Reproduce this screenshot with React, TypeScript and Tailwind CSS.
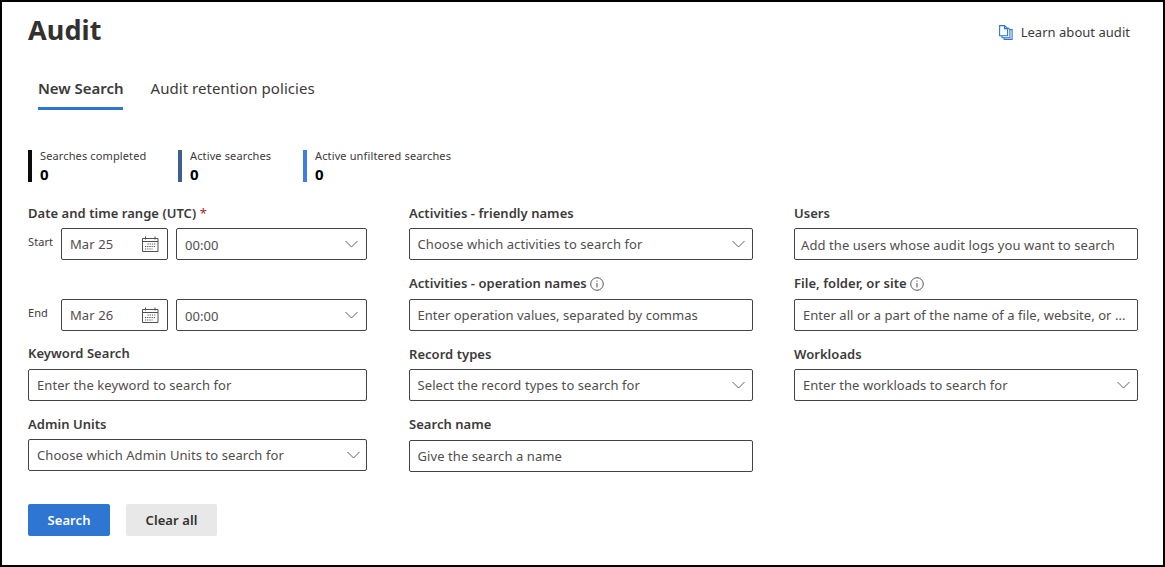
import type { ReactNode } from "react";

function Chevron() {
  return (
    <svg className="h-[8px] w-[13px] shrink-0" viewBox="0 0 13 8" fill="none" stroke="#605e5c" strokeWidth="1">
      <path d="M0.5 1l6 6 6-6" />
    </svg>
  );
}

function CalendarIcon() {
  return (
    <svg className="h-[16px] w-[17px] shrink-0" viewBox="0 0 17 16" fill="none" stroke="#505050">
      <path d="M0.5 2.5h15.5v13H0.5zM0.5 5.5h15.5M3.5 0.5v3M13 0.5v3" />
      <path d="M5.5 8h8.5M3 10.5h11M3 13h7.5" strokeDasharray="1.2 1" />
    </svg>
  );
}

function InfoIcon() {
  return (
    <svg className="mt-[2px] h-[14px] w-[14px] shrink-0" viewBox="0 0 14 14" fill="none" stroke="#444">
      <circle cx="7" cy="7" r="6.3" strokeWidth="0.9" />
      <path d="M7 6v4.5M7 3.6v1.2" strokeWidth="0.9" />
    </svg>
  );
}

function PagesIcon() {
  return (
    <svg className="h-[15px] w-[14px] shrink-0" viewBox="0 0 14 15" fill="none" stroke="#2f76d2" strokeWidth="1.1">
      <path d="M0.6 0.6h5l3 3v7.2h-8zM5.5 0.6v3h3" />
      <path d="M8.7 2.6l2.2 2v8.2H3v-2M10.9 4.6h2.2v9.8H5.2v-1.6" />
    </svg>
  );
}

function Label({ children, info, className = "" }: { children: ReactNode; info?: boolean; className?: string }) {
  return (
    <div className={`flex h-5 items-center gap-[3px] text-[13px] leading-5 font-semibold tracking-[0.04px] whitespace-nowrap text-[#3b3a39] ${className}`}>
      <span>{children}</span>
      {info && <InfoIcon />}
    </div>
  );
}

function Box({ children, icon, className = "pr-[7px] pl-2" }: { children: ReactNode; icon?: ReactNode; className?: string }) {
  return (
    <div className={`flex h-8 items-center justify-between rounded-[2px] border border-[#444] text-[13px] leading-5 whitespace-nowrap text-[#504e4c] ${className}`}>
      <span>{children}</span>
      {icon}
    </div>
  );
}

function Stat({ label, color, className }: { label: string; color: string; className: string }) {
  return (
    <div className={`flex h-8 gap-2 ${className}`}>
      <div className={`w-1 ${color}`} />
      <div className="whitespace-nowrap">
        <div className="h-3 text-[11px] leading-3 tracking-[0.13px] text-[#3b3a39]">{label}</div>
        <div className="mt-[3px] text-[15px] leading-[18px] font-bold text-black">0</div>
      </div>
    </div>
  );
}

function DateRow({ label, date }: { label: string; date: string }) {
  return (
    <div className="flex h-8">
      <div className="w-[33px] pt-[6px] text-[11px] leading-4 tracking-[0.1px] text-[#3b3a39]">{label}</div>
      <Box className="w-[107px] pr-[8px] pl-2" icon={<CalendarIcon />}>{date}</Box>
      <Box className="ml-2 w-[191px] pr-[8px] pl-2" icon={<Chevron />}>
        <span className="block pt-[2px]">00:00</span>
      </Box>
    </div>
  );
}

export default function App() {
  return (
    <div className="h-[567px] w-[1165px] overflow-hidden border-2 border-black bg-white font-['Noto_Sans','Open_Sans',sans-serif] tracking-[0.08px]">
      <header className="flex justify-between pr-[33px] pl-[26px]">
        <h1 className="pt-[10px] text-[27px] leading-9 font-bold text-[#323130]">Audit</h1>
        <div className="mt-5 flex h-5 items-center gap-2 text-[13px] leading-5 tracking-[0.03px] text-[#3b3a39]">
          <PagesIcon />
          <span>Learn about audit</span>
        </div>
      </header>

      <nav className="mt-[30px] flex gap-[27.5px] pl-[36px] text-[15px] leading-5 whitespace-nowrap text-[#3b3a39]">
        <div className="h-8 w-[85px] border-b-[3px] border-[#2f76d2] font-semibold tracking-[-0.03px]">New Search</div>
        <div className="tracking-[0.05px]">Audit retention policies</div>
      </nav>

      <section className="mt-10 flex pl-[26px]">
        <Stat label="Searches completed" color="bg-[#0b0b0b]" className="w-[150px]" />
        <Stat label="Active searches" color="bg-[#3b5f8f]" className="w-[125px]" />
        <Stat label="Active unfiltered searches" color="bg-[#3b7de9]" className="w-[160px]" />
      </section>

      <main className="mt-[21px] flex pl-[26px]">
        <div className="w-[339px]">
          <Label>
            Date and time range (UTC) <span className="font-normal text-[#a4262c]">*</span>
          </Label>
          <div className="mt-[5px]"><DateRow label="Start" date="Mar 25" /></div>
          <div className="mt-[39px]"><DateRow label="End" date="Mar 26" /></div>
          <Label className="mt-3">Keyword Search</Label>
          <Box className="mt-[6px] pr-[7px] pl-2">Enter the keyword to search for</Box>
          <Label className="mt-[13px]">Admin Units</Label>
          <Box className="mt-[5px] pr-[6px] pl-2" icon={<Chevron />}>Choose which Admin Units to search for</Box>
        </div>

        <div className="ml-[42px] w-[344px]">
          <Label>Activities - friendly names</Label>
          <Box className="mt-[5px] pr-[7px] pl-[7.5px]" icon={<Chevron />}>Choose which activities to search for</Box>
          <Label className="mt-[13px]" info>Activities - operation names</Label>
          <Box className="mt-[6px] pr-[7px] pl-[7.5px] tracking-[0.03px]">Enter operation values, separated by commas</Box>
          <Label className="mt-[13px]">Record types</Label>
          <Box className="mt-[5px] pr-[7px] pl-[7.5px]" icon={<Chevron />}>Select the record types to search for</Box>
          <Label className="mt-[13px]">Search name</Label>
          <Box className="mt-[6px] pr-[7px] pl-[7.5px]">Give the search a name</Box>
        </div>

        <div className="ml-[41px] w-[344px]">
          <Label>Users</Label>
          <Box className="mt-[5px] pl-[6px]">
            <span className="block pt-[2px]">Add the users whose audit logs you want to search</span>
          </Box>
          <Label className="mt-[13px]" info>File, folder, or site</Label>
          <Box className="mt-[6px] pl-2 tracking-[0.05px]">Enter all or a part of the name of a file, website, or ...</Box>
          <Label className="mt-[13px]">Workloads</Label>
          <Box className="mt-[5px] pr-[7px] pl-2 tracking-[0.04px]" icon={<Chevron />}>Enter the workloads to search for</Box>
        </div>
      </main>

      <footer className="mt-8 flex gap-4 pl-[26px] text-[13px] leading-5 font-semibold">
        <button className="h-8 w-[82px] rounded-[2px] bg-[#2f76d2] text-white">Search</button>
        <button className="h-8 w-[91px] rounded-[2px] bg-[#e8e8e8] text-[#323130]">Clear all</button>
      </footer>
    </div>
  );
}
